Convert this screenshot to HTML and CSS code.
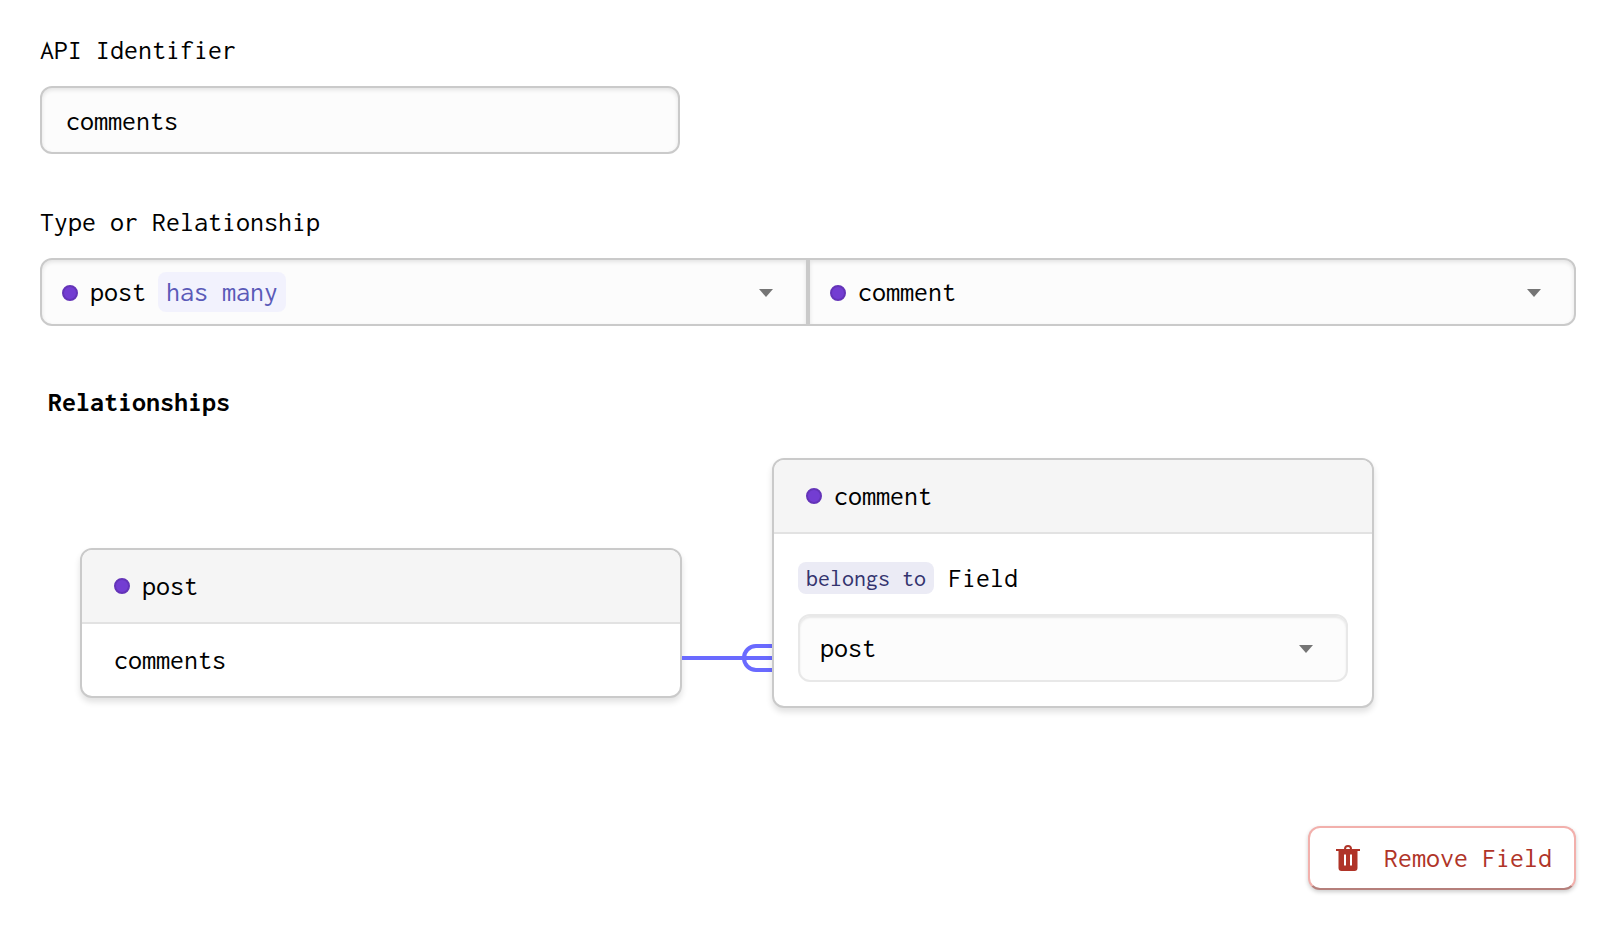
FILE: index.html
```html
<!DOCTYPE html>
<html lang="en">
<head>
  <meta charset="UTF-8" />
  <meta name="viewport" content="width=device-width, initial-scale=1.0"/>
  <title>Edit Field</title>
  <link rel="stylesheet" href="styles.css">
</head>
<body>
  <form class="field-form">
    <label class="field-label" for="api-identifier">API Identifier</label>
    <input class="control text-input" id="api-identifier" type="text" value="comments">

    <label class="field-label" for="relation-type">Type or Relationship</label>
    <div class="select-group">
      <div class="select-box">
        <select class="control has-dot" id="relation-type">
          <option>post</option>
        </select>
        <span class="dot"></span>
        <span class="tag tag-many">has many</span>
        <svg class="arrow" viewBox="0 0 14 8"><path d="M0 0h14L7 8z"/></svg>
      </div>
      <div class="select-box">
        <select class="control has-dot" id="relation-model" aria-label="Related model">
          <option>comment</option>
        </select>
        <span class="dot"></span>
        <svg class="arrow" viewBox="0 0 14 8"><path d="M0 0h14L7 8z"/></svg>
      </div>
    </div>

    <h2 class="section-title">Relationships</h2>

    <div class="diagram">
      <section class="card card-source">
        <header class="card-header"><span class="dot"></span>post</header>
        <div class="card-row">comments</div>
      </section>

      <svg class="connector" viewBox="0 0 90 28">
        <path d="M0 14h90M90 2H74a12 12 0 0 0 0 24h16"/>
      </svg>

      <section class="card">
        <header class="card-header"><span class="dot"></span>comment</header>
        <div class="card-body">
          <label class="card-label" for="belongs-to"><span class="tag tag-belongs">belongs to</span>Field</label>
          <div class="select-box">
            <select class="control soft" id="belongs-to">
              <option>post</option>
            </select>
            <svg class="arrow" viewBox="0 0 14 8"><path d="M0 0h14L7 8z"/></svg>
          </div>
        </div>
      </section>
    </div>

    <div class="actions">
      <button class="remove-button" type="button">
        <svg class="trash" viewBox="0 0 28 28">
          <path class="trash-handle" d="M11 6V5a3 3 0 0 1 6 0v1"/>
          <path fill-rule="evenodd" d="M2 5h24v2h-2.500V24a3 3 0 0 1-3 3h-13a3 3 0 0 1-3-3V7H2zM10 10.500v11h2v-11zM16 10.500v11h2v-11z"/>
        </svg>
        Remove Field
      </button>
    </div>
  </form>
</body>
</html>
```

FILE: styles.css
```css
/* Reset and base styles */
* {
  box-sizing: border-box;
  margin: 0;
  padding: 0;
}

body {
  font-family: 'Inconsolata', 'DejaVu Sans Mono', monospace;
  font-size: 28px;
  line-height: 32px;
  background-color: #fff;
  color: #000;
}

.field-form {
  display: flex;
  flex-direction: column;
  padding: 34px 46px 54px 40px;
}

.field-label {
  margin-bottom: 20px;
}

/* Inputs and selects */
.control {
  display: block;
  width: 100%;
  height: 68px;
  padding: 0 60px 0 20px;
  font: inherit;
  color: #000;
  background-color: #fcfcfc;
  border: 2px solid #cacaca;
  border-radius: 12px;
  box-shadow: inset 0 2px 4px rgba(0, 0, 0, 0.1);
  appearance: none;
}

.control:focus {
  outline: none;
  border-color: #6a6aff;
}

.text-input {
  max-width: 640px;
  padding: 0 24px;
  margin-bottom: 52px;
}

.has-dot {
  padding-left: 48px;
}

.soft {
  border-color: #e8e8e8;
  box-shadow: inset 0 2px 2px #e8e8e8;
}

.select-box {
  position: relative;
  flex: 1;
}

.select-group {
  display: flex;
}

.select-group .select-box:first-child .control {
  border-top-right-radius: 0;
  border-bottom-right-radius: 0;
}

.select-group .select-box:last-child .control {
  border-top-left-radius: 0;
  border-bottom-left-radius: 0;
}

.dot {
  width: 16px;
  height: 16px;
  border: 2px solid #6434b8;
  border-radius: 50%;
  background-color: #733dd2;
}

.select-box .dot {
  position: absolute;
  left: 22px;
  top: 27px;
  pointer-events: none;
}

.arrow {
  position: absolute;
  right: 35px;
  top: 31px;
  width: 14px;
  height: 8px;
  fill: #757575;
  pointer-events: none;
}

.tag {
  padding: 0 8px;
  border-radius: 8px;
}

.tag-many {
  position: absolute;
  left: 118px;
  top: 14px;
  line-height: 40px;
  color: #5a5ab8;
  background-color: #f2f2fd;
  pointer-events: none;
}

.tag-belongs {
  margin-right: 14px;
  font-size: 24px;
  line-height: 32px;
  color: #33336e;
  background-color: #ebebf5;
}

/* Relationship diagram */
.section-title {
  margin: 60px 8px 40px;
  font-size: 28px;
  font-weight: bold;
}

.diagram {
  display: flex;
  align-items: flex-start;
  padding-left: 40px;
}

.card {
  flex: 0 1 602px;
  background-color: #fff;
  border: 2px solid #cacaca;
  border-radius: 12px;
  box-shadow: 0 4px 6px rgba(0, 0, 0, 0.12);
  overflow: hidden;
}

.card-source {
  margin-top: 90px;
}

.card-header {
  display: flex;
  align-items: center;
  gap: 12px;
  height: 74px;
  padding: 0 32px;
  background-color: #f5f5f5;
  border-bottom: 2px solid #e2e2e2;
}

.card-row {
  padding: 20px 32px;
}

.card-body {
  padding: 24px;
}

.card-label {
  display: flex;
  align-items: center;
  height: 40px;
  margin-bottom: 16px;
}

.connector {
  flex: none;
  width: 90px;
  height: 28px;
  margin-top: 186px;
  fill: none;
  stroke: #6a6aff;
  stroke-width: 4;
}

/* Remove button */
.actions {
  display: flex;
  justify-content: flex-end;
  margin-top: 118px;
}

.remove-button {
  display: flex;
  align-items: center;
  gap: 22px;
  height: 64px;
  padding: 0 22px 0 24px;
  font: inherit;
  color: #b03428;
  background-color: #fff;
  border: 2px solid #f2b0ac;
  border-bottom-color: #b57f7b;
  border-radius: 12px;
  box-shadow: 0 2px 4px rgba(0, 0, 0, 0.2);
  cursor: pointer;
}

.remove-button:hover {
  background-color: #fdf3f2;
}

.trash {
  width: 28px;
  height: 28px;
  fill: #b03428;
}

.trash-handle {
  fill: none;
  stroke: #b03428;
  stroke-width: 2;
}
```
